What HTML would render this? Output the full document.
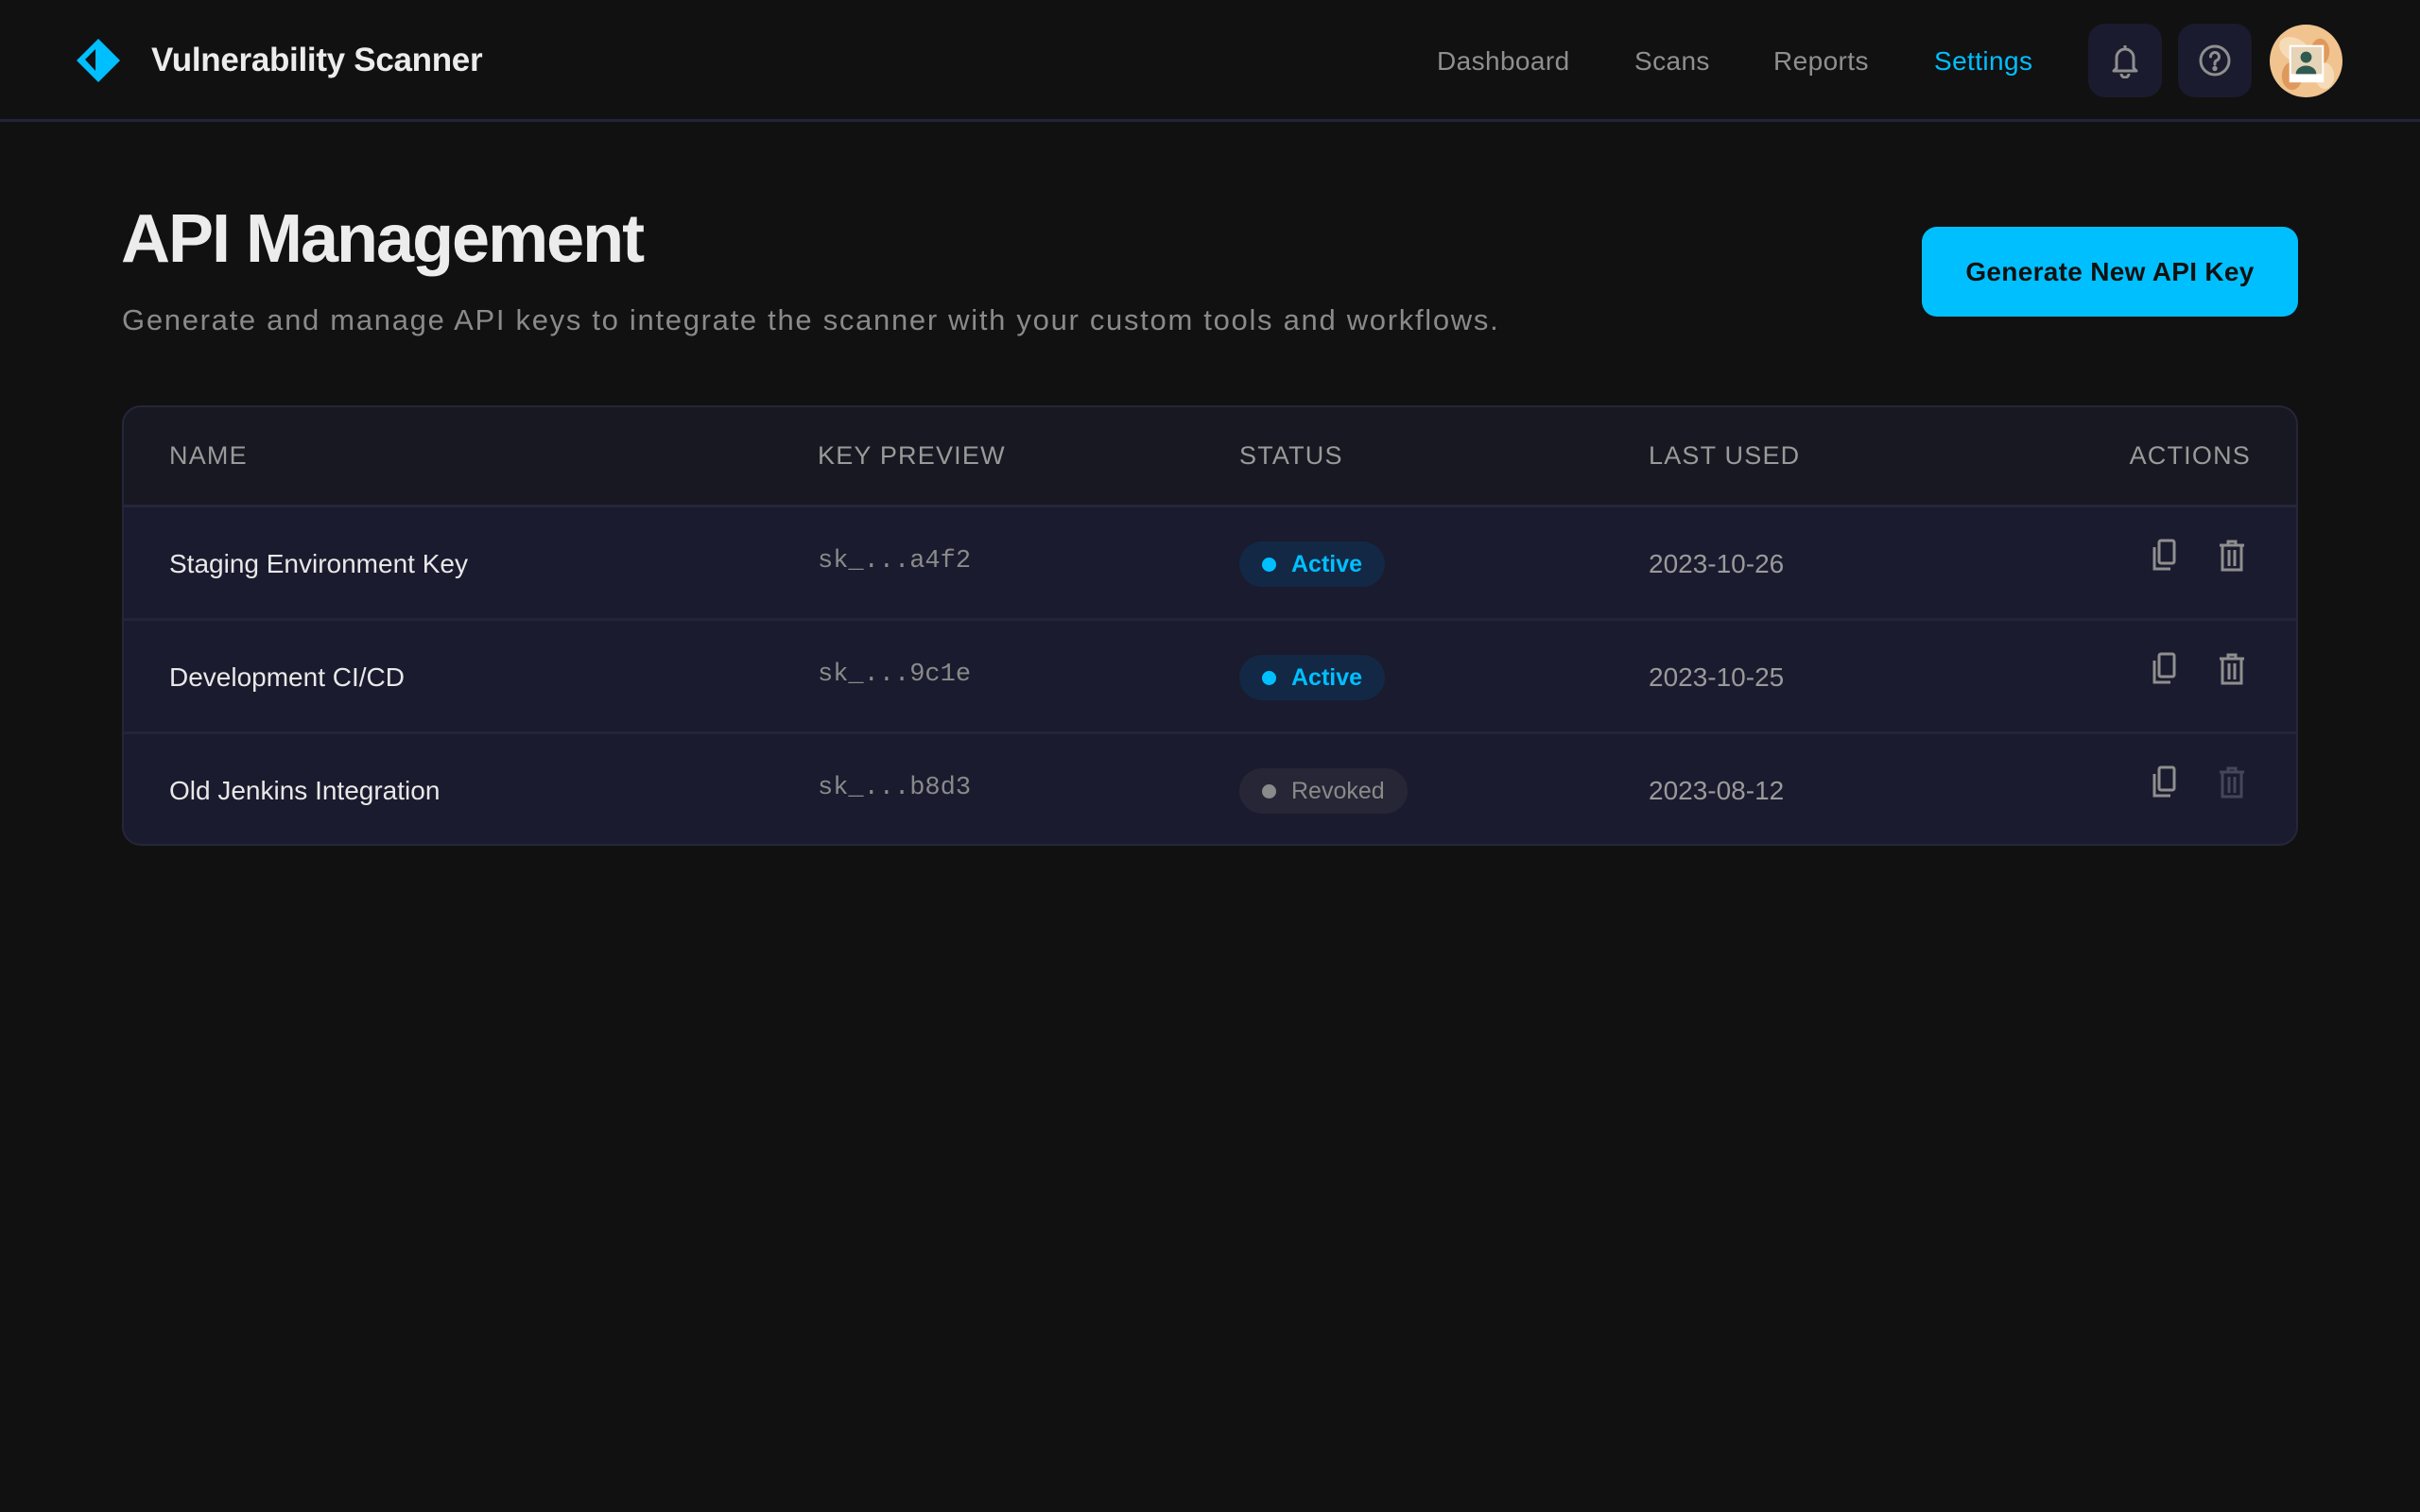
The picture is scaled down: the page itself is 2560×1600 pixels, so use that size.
<!DOCTYPE html>
<html><head><meta charset="utf-8"><style>
*{box-sizing:border-box;margin:0;padding:0}
body{width:2560px;height:1600px;background:#111111;font-family:"Liberation Sans",sans-serif;color:#e8e8e8;position:relative;overflow:hidden}
.hdr{position:absolute;left:0;top:0;width:2560px;height:129px;border-bottom:3px solid #23243a}
.abs{position:absolute}
.title{left:160px;top:44px;font-size:35px;font-weight:600;color:#ececec;letter-spacing:-0.3px}
.nav{top:49px;font-size:28px;color:#8f8f8f;letter-spacing:0.4px}
.ib{width:78px;height:78px;border-radius:18px;background:#1a1b2e;top:25px;display:flex;align-items:center;justify-content:center}
h1{position:absolute;left:128px;top:212px;font-size:72px;font-weight:700;color:#ececec;letter-spacing:-2px}
.sub{left:129px;top:321px;font-size:31px;color:#8a8a8a;letter-spacing:1.7px}
.btn{left:2033px;top:240px;width:398px;height:95px;border-radius:16px;background:#00bfff;color:#111;font-weight:700;font-size:28px;display:flex;align-items:center;justify-content:center;letter-spacing:0.3px}
.tbl{left:129px;top:429px;width:2302px;height:466px;border:2px solid #25263a;border-radius:20px;overflow:hidden;background:#1a1b2e}
.th{position:absolute;left:0;top:0;width:100%;height:106px;background:#181822;border-bottom:3px solid #25263a}
.hc{position:absolute;top:36px;font-size:27px;color:#9a9a9a;letter-spacing:1.2px;font-weight:500}
.row{position:absolute;left:0;width:100%;height:120px;border-bottom:3px solid #23243a}
.c{position:absolute;top:44px;font-size:28px}
.mono{font-family:"Liberation Mono",monospace;color:#8a8a8a;font-size:27px;top:42px}
.badge{position:absolute;left:1180px;top:36px;height:48px;border-radius:24px;display:flex;align-items:center;padding:0 24px 0 24px;font-size:25px;font-weight:700}
.badge i{width:15px;height:15px;border-radius:50%;margin-right:16px;display:block}
.date{left:1613px;color:#9a9a9a}
</style></head><body>
<div class="hdr">
 <svg class="abs" style="left:80px;top:40px" width="48" height="48" viewBox="0 0 48 48"><path d="M24 1 L47 24 L24 47 L1 24 Z" fill="#00bfff"/><path d="M21 12 L10 23 L21 35 Z" fill="#111"/></svg>
 <div class="abs title">Vulnerability Scanner</div>
 <div class="abs nav" style="left:1520px">Dashboard</div>
 <div class="abs nav" style="left:1729px">Scans</div>
 <div class="abs nav" style="left:1876px">Reports</div>
 <div class="abs nav" style="left:2046px;color:#00bfff">Settings</div>
 <div class="abs ib" style="left:2209px"><svg width="34" height="38" viewBox="0 0 34 38" fill="none" stroke="#8f8f8f" stroke-width="3"><path d="M17 3v3M8 27V16a9 9 0 0 1 18 0v11l3 3H5z" stroke-linejoin="round"/><path d="M13 33a4 4 0 0 0 8 0"/></svg></div>
 <div class="abs ib" style="left:2304px"><svg width="36" height="36" viewBox="0 0 36 36" fill="none" stroke="#8f8f8f" stroke-width="3"><circle cx="18" cy="18" r="15"/><path d="M13.5 14a4.5 4.5 0 1 1 6 4.2c-1 .5-1.5 1.3-1.5 2.5v1.3" stroke-linecap="round"/><circle cx="18" cy="26.5" r="1.2" fill="#8f8f8f"/></svg></div>
 <svg class="abs" style="left:2400px;top:25px" width="79" height="79" viewBox="0 0 80 80"><circle cx="40" cy="40" r="39" fill="#f0c38f"/><ellipse cx="28" cy="28" rx="18" ry="12" fill="#f6dbb8" transform="rotate(30 28 28)"/><ellipse cx="55" cy="30" rx="10" ry="14" fill="#e0995c"/><ellipse cx="25" cy="56" rx="11" ry="15" fill="#e0995c"/><ellipse cx="60" cy="56" rx="10" ry="14" fill="#f6dbb8"/><rect x="22" y="23" width="37" height="40" fill="#fff"/><rect x="24" y="25" width="33" height="29" fill="#e6d4b8"/><circle cx="40" cy="36" r="6" fill="#2f5a50"/><path d="M29 54 a11 9 0 0 1 22 0z" fill="#2f5a50"/></svg>
</div>
<h1>API Management</h1>
<div class="abs sub">Generate and manage API keys to integrate the scanner with your custom tools and workflows.</div>
<div class="abs btn">Generate New API Key</div>
<div class="abs tbl">
 <div class="th">
  <div class="hc" style="left:48px">NAME</div>
  <div class="hc" style="left:734px">KEY PREVIEW</div>
  <div class="hc" style="left:1180px">STATUS</div>
  <div class="hc" style="left:1613px">LAST USED</div>
  <div class="hc" style="right:48px">ACTIONS</div>
 </div>
 <div class="row" style="top:106px">
  <div class="c" style="left:48px">Staging Environment Key</div>
  <div class="c mono" style="left:734px">sk_...a4f2</div>
  <div class="badge" style="background:#132845;color:#00bfff"><i style="background:#00bfff"></i>Active</div>
  <div class="c date">2023-10-26</div>
 </div>
 <div class="row" style="top:226px">
  <div class="c" style="left:48px">Development CI/CD</div>
  <div class="c mono" style="left:734px">sk_...9c1e</div>
  <div class="badge" style="background:#132845;color:#00bfff"><i style="background:#00bfff"></i>Active</div>
  <div class="c date">2023-10-25</div>
 </div>
 <div class="row" style="top:346px;border-bottom:none">
  <div class="c" style="left:48px">Old Jenkins Integration</div>
  <div class="c mono" style="left:734px">sk_...b8d3</div>
  <div class="badge" style="background:#262636;color:#8a8a8a;font-weight:500"><i style="background:#8a8a8a"></i>Revoked</div>
  <div class="c date">2023-08-12</div>
 </div>
</div>
<svg class="abs" style="left:2274px;top:570px" width="32" height="36" viewBox="0 0 32 36" fill="none" stroke="#8f8f8f" stroke-width="3"><rect x="10" y="2" width="16" height="24" rx="2"/><path d="M5 9v23h17"/></svg>
<svg class="abs" style="left:2346px;top:570px" width="30" height="36" viewBox="0 0 30 36" fill="none" stroke="#8f8f8f" stroke-width="3"><path d="M2 7h26M11 7V3h8v4"/><path d="M5 7v26h20V7M12 12v17M18 12v17"/></svg>
<svg class="abs" style="left:2274px;top:690px" width="32" height="36" viewBox="0 0 32 36" fill="none" stroke="#8f8f8f" stroke-width="3"><rect x="10" y="2" width="16" height="24" rx="2"/><path d="M5 9v23h17"/></svg>
<svg class="abs" style="left:2346px;top:690px" width="30" height="36" viewBox="0 0 30 36" fill="none" stroke="#8f8f8f" stroke-width="3"><path d="M2 7h26M11 7V3h8v4"/><path d="M5 7v26h20V7M12 12v17M18 12v17"/></svg>
<svg class="abs" style="left:2274px;top:810px" width="32" height="36" viewBox="0 0 32 36" fill="none" stroke="#8f8f8f" stroke-width="3"><rect x="10" y="2" width="16" height="24" rx="2"/><path d="M5 9v23h17"/></svg>
<svg class="abs" style="left:2346px;top:810px" width="30" height="36" viewBox="0 0 30 36" fill="none" stroke="#45465a" stroke-width="3"><path d="M2 7h26M11 7V3h8v4"/><path d="M5 7v26h20V7M12 12v17M18 12v17"/></svg>
</body></html>
